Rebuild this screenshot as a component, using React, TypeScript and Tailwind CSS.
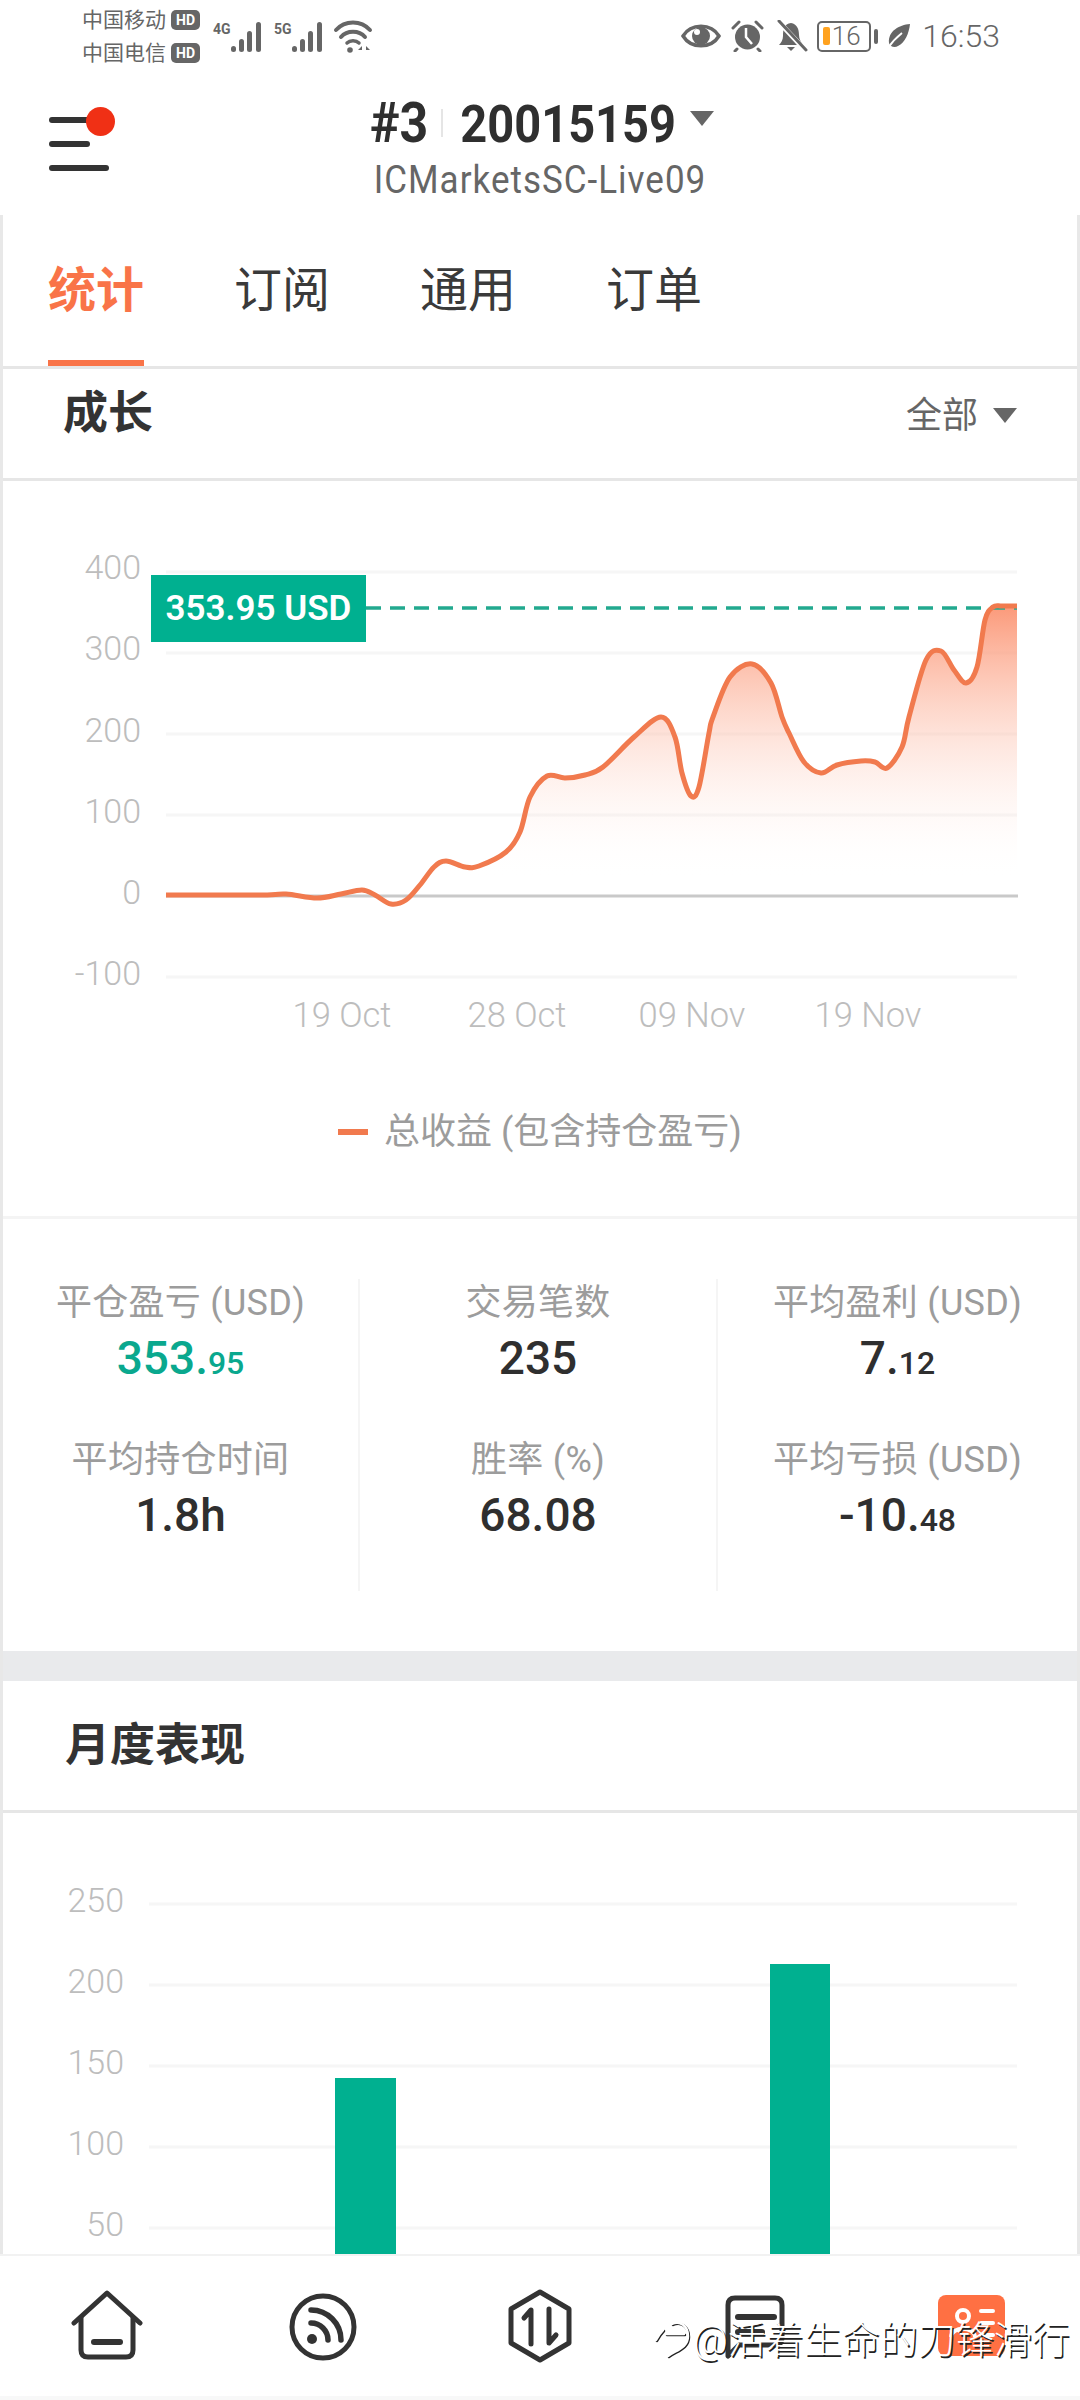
import React from 'react';

const line: [number, number][] = [
  [166, 895], [262, 895], [286, 894], [317, 898], [341, 894], [362, 890], [375, 895], [391, 904], [406, 900],
  [420, 885], [434, 867], [446, 861], [465, 867], [479, 866], [506, 852], [520, 832], [530, 797], [547, 776],
  [565, 778], [585, 775], [603, 767], [634, 737], [661, 717], [675, 737], [682, 773], [691, 796], [699, 787],
  [709, 733], [713, 717], [730, 677], [752, 664], [771, 683], [782, 717], [789, 733], [804, 762], [821, 773],
  [837, 765], [861, 761], [875, 762], [887, 768], [902, 747], [909, 717], [926, 660], [941, 651], [954, 670],
  [966, 683], [977, 667], [985, 620], [993, 607], [1002, 606], [1017, 606],
];

// catmull-rom through the points
const toPath = (pts: [number, number][]) => {
  let d = `M${pts[0][0]} ${pts[0][1]}`;
  for (let i = 0; i < pts.length - 1; i++) {
    const p0 = pts[Math.max(i - 1, 0)];
    const p1 = pts[i];
    const p2 = pts[i + 1];
    const p3 = pts[Math.min(i + 2, pts.length - 1)];
    const c1x = p1[0] + (p2[0] - p0[0]) / 6;
    const c1y = p1[1] + (p2[1] - p0[1]) / 6;
    const c2x = p2[0] - (p3[0] - p1[0]) / 6;
    const c2y = p2[1] - (p3[1] - p1[1]) / 6;
    d += ` C${c1x} ${c1y} ${c2x} ${c2y} ${p2[0]} ${p2[1]}`;
  }
  return d;
};

const curve = toPath(line);

const HdBadge = () => (
  <span className="flex h-[20px] w-[29px] items-center justify-center rounded-[5px] bg-[#666] text-[14px] font-bold leading-none text-white">
    HD
  </span>
);

const Signal = ({ label }: { label: string }) => (
  <div className="relative h-[32px] w-[51px]">
    <span className="absolute left-0 top-0 text-[14px] font-bold leading-[16px] text-[#666]">{label}</span>
    <svg width="51" height="32" viewBox="0 0 51 32" className="absolute left-0 top-0">
      <rect x="18" y="25" width="5" height="6" rx="2.5" fill="#666" />
      <rect x="26" y="18" width="5" height="13" rx="2.5" fill="#666" />
      <rect x="34" y="10" width="5" height="21" rx="2.5" fill="#666" />
      <rect x="43" y="1" width="5" height="30" rx="2.5" fill="#666" />
    </svg>
  </div>
);

const StatusBar = () => (
  <div className="flex h-[72px] items-center justify-between pl-[82px] pr-[80px] text-[#666]">
    <div className="flex items-center">
      <div className="flex w-[131px] flex-col gap-[12px] pt-[1px]">
        <div className="flex h-[21px] items-center gap-[5px] text-[21px] leading-none">
          中国移动
          <HdBadge />
        </div>
        <div className="flex h-[21px] items-center gap-[5px] text-[21px] leading-none">
          中国电信
          <HdBadge />
        </div>
      </div>
      <div className="mt-[2px] flex items-center gap-[10px]">
        <Signal label="4G" />
        <Signal label="5G" />
      </div>
      <svg width="40" height="34" viewBox="0 0 40 34" className="ml-[8px]" fill="none" stroke="#666" strokeLinecap="round">
        <path d="M3 11 C12 1 28 1 37 11" strokeWidth="4" />
        <path d="M8 18 C14 11 26 11 32 18" strokeWidth="4" />
        <path d="M14 24 C17 21 23 21 26 24" strokeWidth="3.5" />
        <circle cx="17" cy="31" r="2.8" fill="#666" stroke="none" />
        <path d="M29 27 L25 31 H29 Z M33 27 L37 31 H33 Z" fill="#666" stroke="none" />
      </svg>
    </div>
    <div className="flex items-center">
      <svg width="40" height="28" viewBox="0 0 40 28" fill="none">
        <path d="M2 14 C10 1 30 1 38 14 C30 27 10 27 2 14 Z" fill="none" stroke="#666" strokeWidth="3.5" />
        <circle cx="20" cy="14" r="9" fill="#666" />
        <circle cx="16" cy="10" r="3" fill="#fff" />
      </svg>
      <svg width="33" height="32" viewBox="0 0 33 32" className="ml-[10px]">
        <circle cx="16.5" cy="17" r="12.5" fill="#666" />
        <path d="M15 8 V17 L21 24" stroke="#fff" strokeWidth="2.5" fill="none" />
        <path d="M2 8 L8 2 M31 8 L25 2 M6 29 L4 31 M27 29 L29 31" stroke="#666" strokeWidth="3" strokeLinecap="round" />
      </svg>
      <svg width="32" height="32" viewBox="0 0 32 32" className="ml-[12px]">
        <path d="M15 3 C8 4 7 10 7 16 C7 20 5 23 3 25 H27 C25 22 23 19 23 15 C23 9 21 4 15 3 Z" fill="#666" />
        <path d="M11 27 H19 L15 31 Z" fill="#666" />
        <path d="M2 1 L30 31" stroke="#fff" strokeWidth="5" />
        <path d="M3 1 L30 30" stroke="#666" strokeWidth="3" strokeLinecap="round" />
      </svg>
      <div className="relative ml-[9px] flex h-[31px] w-[54px] items-center justify-center rounded-[5px] border-[2.5px] border-[#666] pl-[4px] text-[26px] font-light leading-none">
        <span className="absolute left-[4px] top-[4px] h-[18px] w-[7px] rounded-[2px] bg-[#ffa21f]" />
        <span className="relative">16</span>
      </div>
      <span className="ml-[3px] h-[15px] w-[4px] rounded-[2px] bg-[#666]" />
      <svg width="24" height="26" viewBox="0 0 24 26" className="ml-[9px]">
        <path d="M23 1 C12 2 1 8 2 20 C3 24 8 25 11 23 C18 20 22 10 23 1 Z" fill="#666" />
        <path d="M1 25 C5 19 10 14 15 10" stroke="#fff" strokeWidth="1.8" fill="none" />
      </svg>
      <span className="ml-[11px] text-[32px] font-light leading-none">16:53</span>
    </div>
  </div>
);

const Triangle = ({ className }: { className: string }) => (
  <span className={`block h-0 w-0 border-x-[12px] border-t-[15px] border-x-transparent border-t-[#666] ${className}`} />
);

const TopBar = () => (
  <div className="relative flex h-[143px] flex-col items-center bg-white">
    <div className="absolute left-[49px] top-[31px] h-[72px] w-[66px]">
      <span className="absolute left-0 top-[14px] h-[6px] w-[50px] rounded-full bg-[#333]" />
      <span className="absolute left-0 top-[38px] h-[6px] w-[41px] rounded-full bg-[#333]" />
      <span className="absolute left-0 top-[62px] h-[6px] w-[60px] rounded-full bg-[#333]" />
      <span className="absolute left-[37px] top-[4px] h-[29px] w-[29px] rounded-full bg-[#f03015]" />
    </div>
    <div className="mt-[29px] flex h-[44px] items-center pl-[4px] text-[#2f2f2f]">
      <span className="scale-y-110 text-[50px] font-bold leading-none">#3</span>
      <span className="ml-[13px] h-[28px] w-[2px] bg-[#e5e5e5]" />
      <span className="ml-[17px] scale-y-110 text-[47px] font-bold leading-none">20015159</span>
      <Triangle className="mb-[10px] ml-[14px]" />
    </div>
    <span className="mt-[18px] scale-y-110 text-[35px] leading-none tracking-[1px] text-[#666]">ICMarketsSC-Live09</span>
  </div>
);

const Tabs = () => (
  <div className="flex h-[151px] gap-[90px] pl-[45px] text-[48px] text-[#3a3a3a]">
    {['统计', '订阅', '通用', '订单'].map((t, i) => (
      <div
        key={t}
        className={
          i === 0
            ? 'flex h-full w-[96px] items-center justify-center border-b-[6px] border-[#f97448] pt-[6px] font-bold text-[#f97448]'
            : 'flex h-full w-[96px] items-center justify-center pb-0'
        }
      >
        {t}
      </div>
    ))}
  </div>
);

const grid1 = [572, 653, 734, 815, 977];
const yLabels1: [string, number][] = [['400', 567], ['300', 648], ['200', 730], ['100', 811], ['0', 892], ['-100', 973]];
const xLabels: [string, number][] = [['19 Oct', 342], ['28 Oct', 517], ['09 Nov', 692], ['19 Nov', 868]];

const GrowthChart = () => (
  <svg width="1074" height="735" viewBox="3 481 1074 735" className="block">
    <defs>
      <linearGradient id="growthFill" gradientUnits="userSpaceOnUse" x1="0" y1="607" x2="0" y2="880">
        <stop offset="0" stopColor="#fb8f6c" stopOpacity="0.9" />
        <stop offset="1" stopColor="#ffffff" stopOpacity="0" />
      </linearGradient>
    </defs>
    {grid1.map((y) => (
      <line key={y} x1="166" x2="1017" y1={y} y2={y} stroke="#f6f6f6" strokeWidth="3" />
    ))}
    <line x1="166" x2="1018" y1="896" y2="896" stroke="#c9c9c9" strokeWidth="3" />
    <path d={`${curve} L1017 896 L166 896 Z`} fill="url(#growthFill)" />
    <line x1="366" x2="1017" y1="608" y2="608" stroke="#22a98f" strokeWidth="3.5" strokeDasharray="15 9" />
    <path d={curve} fill="none" stroke="#f17a4e" strokeWidth="5" strokeLinejoin="round" />
    <rect x="151" y="575" width="215" height="67" fill="#00b090" />
    <text x="258.5" y="620" textAnchor="middle" fontSize="35" fontWeight="600" fill="#fff">353.95 USD</text>
    {yLabels1.map(([t, y]) => (
      <text key={t} x="141" y={y + 12} textAnchor="end" fontSize="34" fontWeight="300" fill="#bdbdbd">{t}</text>
    ))}
    {xLabels.map(([t, x]) => (
      <text key={t} x={x} y="1027" textAnchor="middle" fontSize="34.5" fontWeight="300" fill="#bdbdbd">{t}</text>
    ))}
    <rect x="338" y="1129" width="30" height="6" fill="#f17a4e" />
    <text x="384" y="1144" fontSize="36" fill="#9c9c9c">总收益 (包含持仓盈亏)</text>
  </svg>
);

const stats = [
  [
    { label: '平仓盈亏 (USD)', big: '353.', small: '95', color: 'text-[#0aa88e]' },
    { label: '平均持仓时间', big: '1.8h', small: '', color: 'text-[#2f2f2f]' },
  ],
  [
    { label: '交易笔数', big: '235', small: '', color: 'text-[#2f2f2f]' },
    { label: '胜率 (%)', big: '68.08', small: '', color: 'text-[#2f2f2f]' },
  ],
  [
    { label: '平均盈利 (USD)', big: '7.', small: '12', color: 'text-[#2f2f2f]' },
    { label: '平均亏损 (USD)', big: '-10.', small: '48', color: 'text-[#2f2f2f]' },
  ],
];

const Stats = () => (
  <div className="grid h-[432px] grid-cols-[357px_358px_359px] pt-[60px]">
    {stats.map((col, i) => (
      <div key={i} className={`flex h-[312px] flex-col gap-[47px] text-center ${i < 2 ? 'border-r-2 border-[#f5f5f5]' : ''}`}>
        {col.map((s) => (
          <div key={s.label}>
            <div className="h-[48px] text-[36px] leading-[48px] tracking-[0.3px] text-[#9c9c9c]">{s.label}</div>
            <div className={`h-[62px] text-[46px] font-medium leading-[62px] ${s.color}`}>
              {s.big}
              {s.small && <span className="text-[32px]">{s.small}</span>}
            </div>
          </div>
        ))}
      </div>
    ))}
  </div>
);

const grid2: [string, number][] = [['250', 1904], ['200', 1985], ['150', 2066], ['100', 2147], ['50', 2228]];

const MonthlyChart = () => (
  <svg width="1074" height="441" viewBox="3 1813 1074 441" className="block">
    {grid2.map(([t, y]) => (
      <g key={t}>
        <line x1="149" x2="1017" y1={y} y2={y} stroke="#f6f6f6" strokeWidth="3" />
        <text x="124" y={y + 8} textAnchor="end" fontSize="34" fontWeight="300" fill="#bdbdbd">{t}</text>
      </g>
    ))}
    <rect x="335" y="2078" width="61" height="176" fill="#00b090" />
    <rect x="770" y="1964" width="60" height="290" fill="#00b090" />
  </svg>
);

const BottomNav = () => (
  <div className="relative flex h-[146px] border-t-2 border-[#f2f2f2] bg-white">
    <svg width="74" height="72" viewBox="0 0 74 72" className="absolute left-[70px] top-[34px]" fill="none" stroke="#333" strokeWidth="5" strokeLinecap="round" strokeLinejoin="round">
      <path d="M4 33 L37 3 L70 33" />
      <path d="M11 28 V60 Q11 67 18 67 H56 Q63 67 63 60 V28" />
      <path d="M24 52 H50" strokeWidth="6" />
    </svg>
    <svg width="70" height="70" viewBox="0 0 70 70" className="absolute left-[288px] top-[36px]" fill="none" stroke="#333" strokeWidth="5" strokeLinecap="round">
      <circle cx="35" cy="35" r="31" />
      <path d="M23 31 A17 17 0 0 1 40 48" strokeWidth="5.5" />
      <path d="M23 18 A30 30 0 0 1 53 48" strokeWidth="5.5" />
      <circle cx="24" cy="47" r="5" fill="#333" stroke="none" />
    </svg>
    <svg width="66" height="74" viewBox="0 0 66 74" className="absolute left-[507px] top-[33px]" fill="none" stroke="#333" strokeWidth="5" strokeLinecap="round" strokeLinejoin="round">
      <path d="M33 3 L62 20 V54 L33 71 L4 54 V20 Z" />
      <path d="M24 55 V21 L17 29" />
      <path d="M42 20 V54 L49 46" />
    </svg>
    <svg width="62" height="66" viewBox="0 0 62 66" className="absolute left-[724px] top-[38px]" fill="none" stroke="#333" strokeWidth="5" strokeLinecap="round" strokeLinejoin="round">
      <path d="M4 62 V11 Q4 4 11 4 H51 Q58 4 58 11 V44 Q58 51 51 51 H15 Z" />
      <path d="M14 23 H50" strokeWidth="6" />
      <path d="M14 38 H38" strokeWidth="6" />
    </svg>
    <svg width="67" height="61" viewBox="0 0 67 61" className="absolute left-[938px] top-[39px]">
      <rect width="67" height="61" rx="8" fill="#ff7043" />
      <circle cx="25" cy="21" r="6" fill="none" stroke="#fff" strokeWidth="4" />
      <path d="M13 42 C14 31 36 31 37 42" fill="none" stroke="#fff" strokeWidth="4" />
      <path d="M43 16 H55 M43 28 H55 M43 40 H55" stroke="#fff" strokeWidth="4" strokeLinecap="round" />
    </svg>
  </div>
);

const Watermark = () => (
  <div className="absolute left-[655px] top-[2316px] flex h-[48px] items-center text-[38px] font-light leading-none text-white [text-shadow:1.5px_1.5px_0_#222]">
    <svg width="38" height="46" viewBox="0 0 38 46" fill="none" strokeLinecap="round" strokeWidth="2.5">
      <path d="M2 24 C5 18 7 16 9 14 M12 18 H30 M18 8 C26 4 34 10 34 20 C34 32 22 34 14 40" stroke="#222" />
      <path d="M1 23 C4 17 6 15 8 13 M11 17 H29 M17 7 C25 3 33 9 33 19 C33 31 21 33 13 39" stroke="#fff" />
    </svg>
    <span>@活着生命的刀锋滑行</span>
  </div>
);

export default function App() {
  return (
    <div className="relative h-[2400px] w-[1080px] overflow-hidden bg-white font-[Roboto,'Noto_Sans_CJK_SC',sans-serif]">
      <StatusBar />
      <TopBar />
      <div className="h-[2039px] overflow-hidden border-x-[3px] border-[#e8e8e8]">
        <Tabs />
        <div className="h-[3px] bg-[#e6e6e6]" />
        <div className="flex h-[109px] items-center justify-between pb-[20px] pl-[60px] pr-[60px]">
          <span className="text-[45px] font-bold leading-none text-[#333]">成长</span>
          <span className="flex items-center pt-[4px] text-[36px] leading-none text-[#666]">
            全部
            <Triangle className="ml-[15px]" />
          </span>
        </div>
        <div className="h-[3px] bg-[#e6e6e6]" />
        <GrowthChart />
        <div className="h-[3px] bg-[#f4f4f4]" />
        <Stats />
        <div className="-mx-[3px] h-[30px] bg-[#e9eaec]" />
        <div className="flex h-[129px] items-center pl-[62px]">
          <span className="text-[45px] font-bold leading-none text-[#333]">月度表现</span>
        </div>
        <div className="h-[3px] bg-[#e6e6e6]" />
        <MonthlyChart />
      </div>
      <BottomNav />
      <div className="absolute bottom-0 left-0 h-[4px] w-full bg-[#f8f8f8]" />
      <Watermark />
    </div>
  );
}
